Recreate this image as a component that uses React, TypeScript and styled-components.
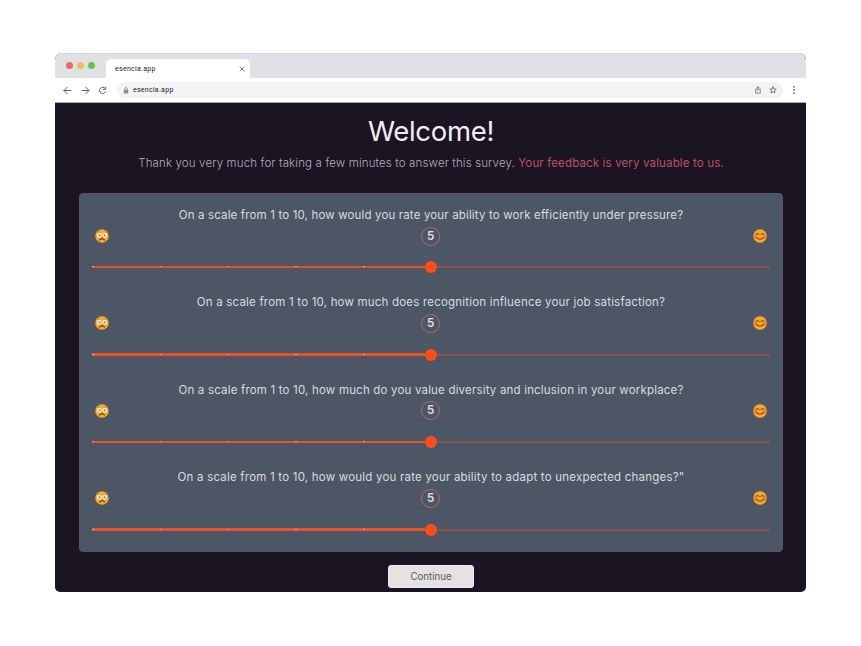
import React from "react";
import styled, { createGlobalStyle } from "styled-components";

const GlobalStyle = createGlobalStyle`
  * { box-sizing: border-box; }
  body { margin: 0; background: #fff; font-family: Inter, "Open Sans", sans-serif; }
`;

const Page = styled.div`
  width: 861px;
  height: 646px;
  padding: 53px 55px 54px;
  background: #fff;
`;

const BrowserWindow = styled.div`
  width: 751px;
  height: 539px;
  border-radius: 7px 7px 5px 5px;
  overflow: hidden;
  background: #1b1423;
`;

const TabStrip = styled.div`
  display: flex;
  height: 25px;
  padding: 5px 0 0 10.5px;
  background: #dfe1e5;
  border-top: 1px solid #d3d4d7;
`;

const Lights = styled.div`
  display: flex;
  gap: 4.4px;
  padding-top: 3.4px;
  width: 40.5px;
`;

const Light = styled.span<{ $color: string }>`
  width: 7px;
  height: 7px;
  border-radius: 50%;
  background: ${(p) => p.$color};
`;

const Tab = styled.div`
  display: flex;
  align-items: center;
  justify-content: space-between;
  width: 144px;
  height: 20px;
  padding: 0 5.5px 0 9px;
  border-radius: 5px 5px 0 0;
  background: #fff;
`;

const ChromeText = styled.span`
  font: 400 7px/12px Roboto, sans-serif;
  letter-spacing: 0.28px;
  color: #1f2023;
`;

const Toolbar = styled.div`
  display: flex;
  align-items: center;
  height: 25px;
  padding: 0 7px 0 8px;
  background: #fff;
  border-bottom: 1px solid #a9a8ad;
`;

const Nav = styled.div`
  display: flex;
  gap: 8.5px;
  width: 54px;
`;

const Icon = styled.svg`
  display: block;
  flex: none;
  fill: none;
  stroke: #606367;
  stroke-linecap: round;
  stroke-linejoin: round;
`;

const Address = styled.div`
  display: flex;
  align-items: center;
  width: 667px;
  height: 16px;
  padding: 0 6px;
  border-radius: 8px;
  background: #f1f3f4;
`;

const AddressLabel = styled.div`
  display: flex;
  align-items: center;
  flex: 1;
  gap: 4px;
`;

const AddressActions = styled.div`
  display: flex;
  gap: 7px;
`;

const MenuIcon = styled(Icon)`
  margin-left: 6px;
`;

const Survey = styled.main`
  display: flex;
  flex-direction: column;
  align-items: center;
  padding: 8px 23px 0 24px;
`;

const Title = styled.h1`
  margin: 0;
  font-size: 27.5px;
  font-weight: 400;
  line-height: 40px;
  letter-spacing: -0.3px;
  color: #f1eff0;
`;

const Intro = styled.p`
  margin: 2px 0 0;
  font-size: 11.5px;
  font-weight: 300;
  line-height: 20px;
  white-space: nowrap;
  letter-spacing: 0.145px;
  color: #b3b0b5;
`;

const Highlight = styled.span`
  font-weight: 400;
  color: #bd5165;
`;

const Card = styled.section`
  width: 704px;
  height: 359px;
  margin-top: 20px;
  padding: 12px 13px 0;
  border-radius: 4px;
  background: #4d5664;
  border: 1px solid #505866;
`;

const Question = styled.div`
  height: 87.45px;
`;

const Prompt = styled.div<{ $spacing: number }>`
  height: 18px;
  line-height: 18px;
  font-size: 11.5px;
  text-align: center;
  white-space: nowrap;
  letter-spacing: ${(p) => p.$spacing}px;
  color: #d9dbdf;
`;

const Scale = styled.div`
  display: flex;
  align-items: center;
  justify-content: space-between;
  height: 22px;
  padding: 0 2px;
  margin-top: 1px;
`;

const Score = styled.div`
  width: 19px;
  height: 19px;
  margin-right: 1px;
  border: 1.3px solid #b56475;
  border-radius: 50%;
  font-size: 11.5px;
  font-weight: 600;
  line-height: 17px;
  text-align: center;
  color: #e1e3e6;
`;

const Slider = styled.div`
  display: flex;
  align-items: center;
  height: 12px;
  margin: 14.2px 0 0 -1px;
  width: 678px;
`;

const Filled = styled.div`
  display: grid;
  grid-template-columns: repeat(5, 67.8px);
  width: 333px;
  height: 2.5px;
  background: #e95128;
`;

const Tick = styled.i`
  width: 1.5px;
  height: 1px;
  margin-top: 0.5px;
  background: #f3a088;
`;

const Thumb = styled.div`
  z-index: 1;
  width: 12px;
  height: 12px;
  border-radius: 50%;
  background: #fa4f1b;
`;

const Remaining = styled.div`
  flex: 1;
  height: 2px;
  background: #8e5149;
`;

const Continue = styled.button`
  width: 86px;
  height: 23px;
  margin-top: 13px;
  padding: 0;
  border: 1px solid #edecee;
  border-radius: 3px;
  background: #e4e2e3;
  font: 400 9.7px/20px Inter, sans-serif;
  color: #5d5a60;
`;

const Worried = () => (
  <svg width="14" height="14" viewBox="0 0 28 28">
    <circle cx="14" cy="14" r="13.5" fill="#f8aa27" />
    <path d="M4 8q3-1 5-4M24 8q-3-1-5-4" stroke="#b97724" strokeWidth="1.5" fill="none" />
    <circle cx="8.5" cy="12.5" r="4.8" fill="#f5e8d5" />
    <circle cx="19.5" cy="12.5" r="4.8" fill="#f5e8d5" />
    <circle cx="9" cy="12.5" r="1.7" fill="#6c5a4b" />
    <circle cx="19" cy="12.5" r="1.7" fill="#6c5a4b" />
    <path d="M9 22q5-5 10 0" stroke="#805019" strokeWidth="2.4" fill="none" strokeLinecap="round" />
  </svg>
);

const Smiling = () => (
  <svg width="14" height="14" viewBox="0 0 28 28">
    <circle cx="14" cy="14" r="13.5" fill="#f8aa27" />
    <circle cx="5.5" cy="16" r="4" fill="#f57a32" />
    <circle cx="22.5" cy="16" r="4" fill="#f57a32" />
    <path d="M6 11q3-4 6 0M16 11q3-4 6 0M8 17.5q6 6 12 0" stroke="#855019" strokeWidth="2.2" fill="none" strokeLinecap="round" />
  </svg>
);

const questions = [
  { text: "On a scale from 1 to 10, how would you rate your ability to work efficiently under pressure?", spacing: 0.15 },
  { text: "On a scale from 1 to 10, how much does recognition influence your job satisfaction?", spacing: 0.195 },
  { text: "On a scale from 1 to 10, how much do you value diversity and inclusion in your workplace?", spacing: 0.185 },
  { text: "On a scale from 1 to 10, how would you rate your ability to adapt to unexpected changes?\"", spacing: 0.21 },
];

export default function App() {
  return (
    <>
      <GlobalStyle />
      <Page>
        <BrowserWindow>
          <TabStrip>
            <Lights>
              <Light $color="#ed6a5e" />
              <Light $color="#f4bd50" />
              <Light $color="#61c455" />
            </Lights>
            <Tab>
              <ChromeText>esencia.app</ChromeText>
              <Icon width="6" height="6" viewBox="0 0 6 6" strokeWidth=".8"><path d="m1 1 4 4M5 1 1 5" /></Icon>
            </Tab>
          </TabStrip>
          <Toolbar>
            <Nav>
              <Icon width="9" height="9" viewBox="0 0 9 9"><path d="M8 4.5H1M4.2 1.3 1 4.5l3.2 3.2" /></Icon>
              <Icon width="9" height="9" viewBox="0 0 9 9"><path d="M1 4.5h7M4.8 1.3 8 4.5 4.8 7.7" /></Icon>
              <Icon width="9" height="9" viewBox="0 0 9 9"><path d="M7.3 2.6A3.2 3.2 0 1 0 7.6 5.6M7.7 1v2.3H5.4" /></Icon>
            </Nav>
            <Address>
              <AddressLabel>
                <Icon width="6" height="7" viewBox="0 0 6 7"><path d="M1.7 3V1.9a1.3 1.3 0 0 1 2.6 0V3" strokeWidth=".8" stroke="#888b8f" /><rect x=".8" y="2.7" width="4.4" height="3.8" rx=".4" fill="#888b8f" stroke="none" /></Icon>
                <ChromeText>esencia.app</ChromeText>
              </AddressLabel>
              <AddressActions>
                <Icon width="8" height="8" viewBox="0 0 8 8" strokeWidth=".7"><path d="M3 3H1.7v4.2h4.6V3H5M4 5V.8M2.8 2 4 .8 5.2 2" /></Icon>
                <Icon width="8" height="8" viewBox="0 0 8 8" strokeWidth=".8"><path d="m4 .8.9 2.1 2.3.2-1.8 1.5.6 2.3L4 5.7 2 6.9l.6-2.3L.8 3.1l2.3-.2Z" /></Icon>
              </AddressActions>
            </Address>
            <MenuIcon width="10" height="10" viewBox="0 0 10 10"><g fill="#606367" stroke="none"><circle cx="5" cy="1.8" r=".9" /><circle cx="5" cy="5" r=".9" /><circle cx="5" cy="8.2" r=".9" /></g></MenuIcon>
          </Toolbar>
          <Survey>
            <Title>Welcome!</Title>
            <Intro>
              Thank you very much for taking a few minutes to answer this survey. <Highlight>Your feedback is very valuable to us.</Highlight>
            </Intro>
            <Card>
              {questions.map((q) => (
                <Question key={q.text}>
                  <Prompt $spacing={q.spacing}>{q.text}</Prompt>
                  <Scale>
                    <Worried />
                    <Score>5</Score>
                    <Smiling />
                  </Scale>
                  <Slider>
                    <Filled><Tick /><Tick /><Tick /><Tick /><Tick /></Filled>
                    <Thumb />
                    <Remaining />
                  </Slider>
                </Question>
              ))}
            </Card>
            <Continue>Continue</Continue>
          </Survey>
        </BrowserWindow>
      </Page>
    </>
  );
}
